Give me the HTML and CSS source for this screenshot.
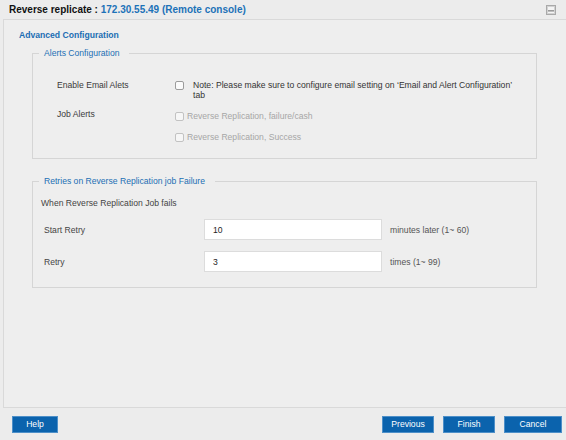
FILE: index.html
```html
<!DOCTYPE html>
<html lang="en">
<head>
<meta charset="utf-8">
<title>Reverse replicate</title>
<link rel="stylesheet" href="styles.css">
</head>
<body>
<header class="titlebar">
  <h1 class="title">Reverse replicate : <span class="title-host">172.30.55.49 (Remote console)</span></h1>
  <button class="minimize" aria-label="Minimize">
    <svg width="10" height="10" viewBox="0 0 10 10" aria-hidden="true">
      <rect x="0.5" y="0.5" width="9" height="9" fill="#e4e4e4" stroke="#a9a9a9"/>
      <rect x="1.5" y="1.5" width="7" height="7" fill="#f4f4f4" stroke="#d2d2d2"/>
      <rect x="2" y="5" width="6" height="1.6" fill="#9a9a9a"/>
    </svg>
  </button>
</header>
<main class="panel">
  <h2 class="section-title">Advanced Configuration</h2>
  <fieldset class="group group-alerts">
    <legend class="group-legend">Alerts Configuration</legend>
    <div class="row row-email">
      <span class="row-label">Enable Email Alets</span>
      <input type="checkbox" class="check">
      <span class="note">Note: Please make sure to configure email setting on ‘Email and Alert Configuration’ tab</span>
    </div>
    <div class="row row-jobs">
      <span class="row-label">Job Alerts</span>
      <div class="options">
        <label class="option"><input type="checkbox" class="check" disabled><span>Reverse Replication, failure/cash</span></label>
        <label class="option"><input type="checkbox" class="check" disabled><span>Reverse Replication, Success</span></label>
      </div>
    </div>
  </fieldset>
  <fieldset class="group group-retries">
    <legend class="group-legend">Retries on Reverse Replication job Failure</legend>
    <p class="intro">When Reverse Replication Job fails</p>
    <div class="field">
      <span class="field-label">Start Retry</span>
      <input type="text" class="field-input" value="10">
      <span class="field-suffix">minutes later (1~ 60)</span>
    </div>
    <div class="field field-second">
      <span class="field-label">Retry</span>
      <input type="text" class="field-input" value="3">
      <span class="field-suffix">times (1~ 99)</span>
    </div>
  </fieldset>
</main>
<footer class="footer">
  <button class="btn btn-help">Help</button>
  <div class="nav-buttons">
    <button class="btn btn-prev">Previous</button>
    <button class="btn btn-finish">Finish</button>
    <button class="btn btn-cancel">Cancel</button>
  </div>
</footer>
</body>
</html>
```
FILE: styles.css
```css
* { box-sizing: border-box; }

html, body {
  margin: 0;
  padding: 0;
  background: #ececec;
  width: 566px;
  height: 440px;
  overflow: hidden;
}

body {
  font-family: "Liberation Sans", Arial, sans-serif;
  font-size: 8.6px;
  line-height: 10px;
  color: #3a3a3a;
}

.titlebar {
  height: 19px;
  display: flex;
  align-items: center;
  justify-content: space-between;
  padding: 0 10px 0 9px;
}

.title {
  margin: 0;
  font-size: 10px;
  line-height: 19px;
  font-weight: bold;
  color: #111;
}

.title-host { color: #1c72b8; }

.minimize {
  border: 0;
  padding: 0;
  margin: 0;
  background: none;
  width: 10px;
  height: 10px;
  display: flex;
}

.panel {
  margin-left: 3px;
  height: 389px;
  border: 1px solid #d9d9d9;
  border-right: none;
  background: #eeeeee;
  padding: 10px 0 0 15px;
}

.section-title {
  margin: 0 0 7px;
  font-size: 8.6px;
  line-height: 11px;
  font-weight: bold;
  color: #1a6db3;
}

.group {
  margin: 0 29px 0 13px;
  border: 1px solid #d5d5d5;
  min-width: 0;
  padding-left: 0;
  padding-right: 0;
}

.group-legend {
  font-size: 8.6px;
  line-height: 11px;
  color: #1c6fb4;
  padding: 0 10px 0 5px;
  margin-left: 6px;
}

.group-alerts { padding-top: 21px; padding-bottom: 16px; }

.row { display: flex; align-items: flex-start; padding-left: 24px; }

.row-label { width: 118px; flex: none; color: #3a3a3a; }

.row-jobs { margin-top: 9px; }

.check {
  appearance: none;
  -webkit-appearance: none;
  width: 9px;
  height: 9px;
  margin: 0;
  border: 1px solid #9c9c9c;
  border-radius: 2px;
  background: #fbfbfb;
  flex: none;
}

.check:disabled { border-color: #c2c2c2; background: #f6f6f6; }

.row-email .check { margin-top: 1px; }

.note {
  margin-left: 9px;
  width: 326px;
  color: #333;
}

.options {
  margin-top: 2px;
  display: flex;
  flex-direction: column;
  gap: 11px;
}

.option {
  display: flex;
  align-items: center;
  gap: 3px;
  height: 10px;
  color: #a6a6a6;
}

.group-retries {
  margin-top: 17px;
  padding-top: 11px;
  padding-bottom: 15px;
}

.intro { margin: 0 0 11px; padding-left: 8px; color: #444; }

.field {
  display: flex;
  align-items: center;
  padding-left: 11px;
}

.field-second { margin-top: 11px; }

.field-label { width: 160px; flex: none; color: #444; }

.field-input {
  width: 178px;
  height: 21px;
  border: 1px solid #dcdcdc;
  background: #fff;
  padding: 0 8px;
  margin: 0;
  font: inherit;
  color: #1e1e1e;
  outline: none;
}

.field-suffix { margin-left: 8px; color: #555; }

.footer {
  display: flex;
  justify-content: space-between;
  align-items: flex-start;
  padding: 8px 4px 0 12px;
}

.nav-buttons { display: flex; gap: 9px; }

.btn {
  height: 17px;
  padding: 0;
  margin: 0;
  border: 1px solid #4d8fc8;
  background: #0b63ad;
  color: #fff;
  font: inherit;
  line-height: 15px;
  text-align: center;
}

.btn-help { width: 46px; }
.btn-prev { width: 52px; }
.btn-finish { width: 52px; }
.btn-cancel { width: 58px; }
```
